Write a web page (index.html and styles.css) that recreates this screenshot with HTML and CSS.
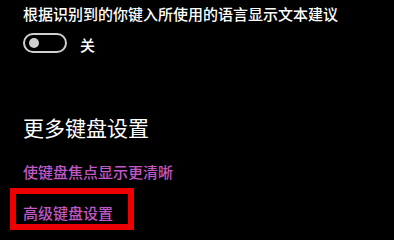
FILE: index.html
```html
<!DOCTYPE html>
<html lang="zh-CN">
<head>
<meta charset="utf-8">
<link rel="stylesheet" href="styles.css">
</head>
<body>
<div class="page">
  <div class="label">根据识别到的你键入所使用的语言显示文本建议</div>
  <div class="toggle-row">
    <span class="toggle"><span class="knob"></span></span>
    <span class="state">关</span>
  </div>
  <h2 class="heading">更多键盘设置</h2>
  <a class="link first" href="#">使键盘焦点显示更清晰</a>
  <a class="link second" href="#">高级键盘设置</a>
  <div class="highlight"></div>
</div>
</body>
</html>
```
FILE: styles.css
```css
html, body {
  margin: 0;
  padding: 0;
  background: #000;
}
body {
  width: 394px;
  height: 230px;
  overflow: hidden;
  font-family: "Microsoft YaHei", "Noto Sans CJK SC", "Noto Sans", sans-serif;
  color: #fff;
}
.page {
  position: relative;
  padding: 4px 0 0 23px;
  display: flex;
  flex-direction: column;
  align-items: flex-start;
}
.label {
  font-size: 15px;
  line-height: 20px;
  font-weight: 500;
}
.toggle-row {
  display: flex;
  align-items: center;
  gap: 13px;
  margin-top: 9px;
}
.toggle {
  box-sizing: border-box;
  width: 44px;
  height: 20px;
  border: 2px solid #cfcfcf;
  border-radius: 10px;
  display: flex;
  align-items: center;
  padding-left: 4px;
}
.knob {
  width: 10px;
  height: 10px;
  border-radius: 50%;
  background: #cfcfcf;
}
.state {
  font-size: 15px;
  line-height: 20px;
  font-weight: 500;
  position: relative;
  top: 2px;
}
.heading {
  margin: 60px 0 0 0;
  font-size: 21px;
  font-weight: normal;
  line-height: 28px;
}
.link {
  color: #c158c6;
  text-decoration: none;
  font-size: 15px;
  line-height: 20px;
  font-weight: 500;
}
.first {
  margin-top: 21px;
}
.second {
  margin-top: 21px;
}
.highlight {
  position: absolute;
  left: 10px;
  top: 188px;
  width: 124px;
  height: 42px;
  box-sizing: border-box;
  border: 6px solid #ee0000;
}
```
